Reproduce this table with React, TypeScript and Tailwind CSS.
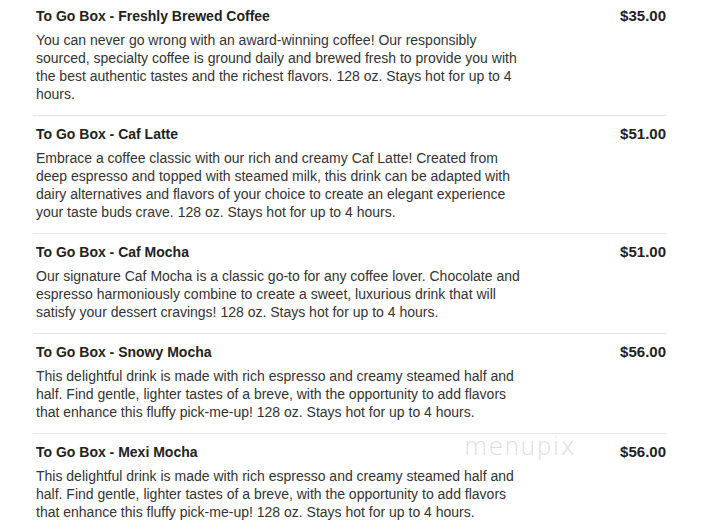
const items = [
  {
    name: "To Go Box - Freshly Brewed Coffee",
    price: "$35.00",
    desc: "You can never go wrong with an award-winning coffee! Our responsibly sourced, specialty coffee is ground daily and brewed fresh to provide you with the best authentic tastes and the richest flavors. 128 oz. Stays hot for up to 4 hours.",
  },
  {
    name: "To Go Box - Caf Latte",
    price: "$51.00",
    desc: "Embrace a coffee classic with our rich and creamy Caf Latte! Created from deep espresso and topped with steamed milk, this drink can be adapted with dairy alternatives and flavors of your choice to create an elegant experience your taste buds crave. 128 oz. Stays hot for up to 4 hours.",
  },
  {
    name: "To Go Box - Caf Mocha",
    price: "$51.00",
    desc: "Our signature Caf Mocha is a classic go-to for any coffee lover. Chocolate and espresso harmoniously combine to create a sweet, luxurious drink that will satisfy your dessert cravings! 128 oz. Stays hot for up to 4 hours.",
  },
  {
    name: "To Go Box - Snowy Mocha",
    price: "$56.00",
    desc: "This delightful drink is made with rich espresso and creamy steamed half and half. Find gentle, lighter tastes of a breve, with the opportunity to add flavors that enhance this fluffy pick-me-up! 128 oz. Stays hot for up to 4 hours.",
  },
  {
    name: "To Go Box - Mexi Mocha",
    price: "$56.00",
    desc: "This delightful drink is made with rich espresso and creamy steamed half and half. Find gentle, lighter tastes of a breve, with the opportunity to add flavors that enhance this fluffy pick-me-up! 128 oz. Stays hot for up to 4 hours.",
  },
];

export default function App() {
  return (
    <div className="relative w-[702px] h-[530px] overflow-hidden bg-white font-['Liberation_Sans',Arial,sans-serif] text-[#333]">
      <div className="ml-[33px] w-[633px]">
        {items.map((item, i) => (
          <div
            key={i}
            className={`${i === 0 ? "pt-[7px]" : "pt-[9px]"} pb-[12px] pl-[3px] ${i < items.length - 1 ? "border-b border-[#e6e6e6]" : ""}`}
          >
            <div className="flex items-start justify-between">
              <h3 className="text-[14px] leading-[18px] font-bold text-[#222]">{item.name}</h3>
              <span className="text-[15px] leading-[18px] font-bold text-[#222]">{item.price}</span>
            </div>
            <p className="mt-[6px] w-[490px] text-[14px] leading-[18px]">{item.desc}</p>
          </div>
        ))}
      </div>

      {/* watermark */}
      <div className="absolute left-[464px] top-[433px] text-[24px] leading-[28px] font-['DejaVu_Sans',sans-serif] font-extralight tracking-[1px] text-[#dcdcdc] pointer-events-none">
        menupix
      </div>
    </div>
  );
}
